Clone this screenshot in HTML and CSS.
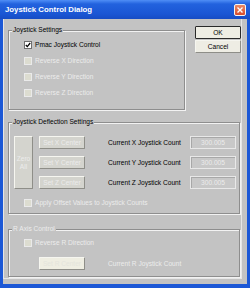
FILE: index.html
```html
<!DOCTYPE html>
<html lang="en">
<head>
  <meta charset="UTF-8">
  <title>Joystick Control Dialog</title>
  <link rel="stylesheet" href="styles.css">
</head>
<body>
  <div class="window">
    <div class="titlebar">
      <span class="title">Joystick Control Dialog</span>
      <span class="close">
        <svg width="6" height="6" viewBox="0 0 6 6"><path d="M0.5 0.5L5.5 5.5M5.5 0.5L0.5 5.5" stroke="#fff" stroke-width="1.4"/></svg>
      </span>
    </div>
    <div class="client">
      <div class="frame">
        <div class="top-row">
          <fieldset class="group group-settings">
            <legend>Joystick Settings</legend>
            <div class="settings-body">
              <div class="check">
                <span class="box">
                  <svg width="6" height="6" viewBox="0 0 6 6"><path d="M0.8 3L2.3 4.6L5.2 1" fill="none" stroke="#000" stroke-width="1.3"/></svg>
                </span>
                <span>Pmac Joystick Control</span>
              </div>
              <div class="check dis"><span class="box"></span><span>Reverse X Direction</span></div>
              <div class="check dis"><span class="box"></span><span>Reverse Y Direction</span></div>
              <div class="check dis"><span class="box"></span><span>Reverse Z Direction</span></div>
            </div>
          </fieldset>
          <div class="side-buttons">
            <button class="btn btn-default">OK</button>
            <button class="btn btn-plain">Cancel</button>
          </div>
        </div>

        <fieldset class="group group-deflection">
          <legend>Joystick Deflection Settings</legend>
          <div class="deflection-body">
            <div class="axis-grid">
              <button class="btn btn-off zero">Zero<br>All</button>
              <button class="btn btn-off">Set X Center</button>
              <span class="count-label">Current X Joystick Count</span>
              <span class="count">300.005</span>
              <button class="btn btn-off">Set Y Center</button>
              <span class="count-label">Current Y Joystick Count</span>
              <span class="count">300.005</span>
              <button class="btn btn-off">Set Z Center</button>
              <span class="count-label">Current Z Joystick Count</span>
              <span class="count">300.005</span>
            </div>
            <div class="check dis offset"><span class="box"></span><span>Apply Offset Values to Joystick Counts</span></div>
          </div>
        </fieldset>

        <fieldset class="group group-r">
          <legend class="dis">R Axis Control</legend>
          <div class="r-body">
            <div class="check dis"><span class="box"></span><span>Reverse R Direction</span></div>
            <div class="r-row">
              <button class="btn btn-light">Set R Center</button>
              <span class="count-label dis">Current R Joystick Count</span>
            </div>
          </div>
        </fieldset>
      </div>
    </div>
  </div>
</body>
</html>
```

FILE: styles.css
```css
body {
  margin: 0;
  font-family: "Liberation Sans", Arial, sans-serif;
  font-size: 6.6px;
  line-height: 8px;
  color: #000;
}
.window {
  width: 250px;
  height: 288px;
  display: flex;
  flex-direction: column;
  background: #1c58d6;
}
.titlebar {
  height: 19px;
  flex: none;
  display: flex;
  align-items: center;
  justify-content: space-between;
  padding: 0 4px 0 5px;
  background: linear-gradient(#4f8ef6, #2262de 4px, #1a56d4 14px, #164cc4);
  color: #fff;
  font-weight: bold;
  font-size: 7.8px;
}
.close {
  width: 12px;
  height: 12px;
  box-sizing: border-box;
  border: 1px solid #f4f4f4;
  border-radius: 2px;
  background: linear-gradient(#ea8a66, #d84c2c);
  display: flex;
  align-items: center;
  justify-content: center;
}
.close svg {
  display: block;
}
.client {
  flex: 1;
  margin: 0 3px 4px;
  background: #c3c3c3;
}
.frame {
  width: 239px;
  height: 260px;
  box-sizing: border-box;
  border: 1px solid #e6e6e6;
  border-top: none;
  padding-left: 4px;
}
.top-row {
  display: flex;
}
.group {
  margin: 0;
  padding: 0;
  min-width: 0;
  border: 1px solid #8e8e8e;
  box-shadow: inset 1px 1px 0 #f2f2f2, 1px 1px 0 #f2f2f2;
  box-sizing: border-box;
}
.group legend {
  padding: 0 1px;
  margin-left: 3px;
  line-height: 8px;
  background: #c3c3c3;
}
.group-settings {
  width: 177px;
  margin-top: 7px;
}
.settings-body {
  padding: 3px 0 8px 15px;
}
.check {
  height: 16px;
  display: flex;
  align-items: center;
}
.check span + span {
  margin-left: 3px;
}
.box {
  width: 8px;
  height: 8px;
  box-sizing: border-box;
  border: 1px solid #6e6e6e;
  background: #fff;
  display: flex;
  align-items: center;
  justify-content: center;
}
.dis {
  color: #ececec;
}
.dis .box {
  border-color: #eaeaea;
  background: #dcdcd0;
}
.side-buttons {
  margin: 7px 0 0 10px;
  display: flex;
  flex-direction: column;
  gap: 1px;
}
.btn {
  font: inherit;
  padding: 0;
  width: 46px;
  height: 13px;
  box-sizing: border-box;
  border: 1px solid;
  border-color: #f6f6f0 #8e8e88 #8e8e88 #f6f6f0;
  border-radius: 1px;
  background: #dcdcd4;
  color: #000;
  line-height: 8px;
}
.btn-default {
  border-color: #2a2a2a;
  background: #eeede4;
}
.btn-plain {
  background: #eeede4;
}
.btn-off {
  color: #ececec;
  background: #d4d4ce;
}
.btn-light {
  color: #e4e4dc;
  background: #efeee2;
}
.group-deflection {
  width: 232px;
  margin-top: 8px;
}
.deflection-body {
  padding: 10px 3px 2px 5px;
}
.axis-grid {
  display: grid;
  grid-template-columns: 19px 46px 1fr 46px;
  grid-auto-rows: 13px;
  column-gap: 6px;
  row-gap: 7px;
  align-items: center;
}
.zero {
  width: 19px;
  height: 53px;
  grid-row: span 3;
}
.count-label {
  margin-left: 17px;
  white-space: nowrap;
}
.count {
  height: 13px;
  box-sizing: border-box;
  border: 1px solid #e8e8e8;
  box-shadow: inset 1px 1px 0 #a8a8a8;
  background: #c8c8c8;
  color: #ececec;
  text-align: center;
  line-height: 11px;
}
.offset {
  margin: 6px 0 0 10px;
}
.group-r {
  width: 232px;
  margin-top: 11px;
}
.r-body {
  padding: 2px 0 6px 15px;
}
.r-row {
  display: flex;
  align-items: center;
  margin: 6px 0 0 15px;
}
.r-row .count-label {
  margin-left: 23px;
}
```
